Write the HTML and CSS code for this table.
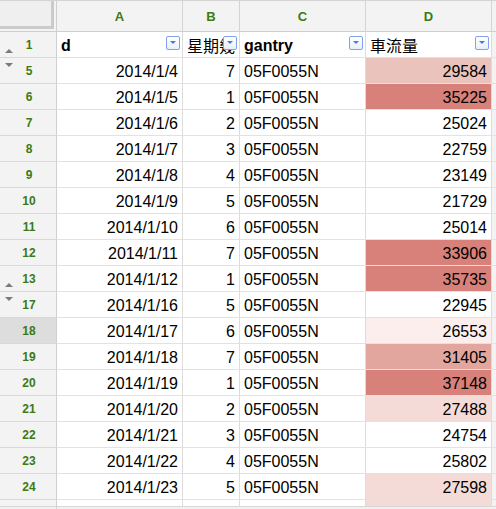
FILE: index.html
```html
<!DOCTYPE html>
<html>
<head>
<meta charset="utf-8">
<link rel="stylesheet" href="styles.css">
</head>
<body>
<div class="sheet">
  <div class="corner"><span class="corner-box"></span></div>
  <div class="colhead">A</div>
  <div class="colhead">B</div>
  <div class="colhead">C</div>
  <div class="colhead">D</div>
  <div class="gutter head-gutter"></div>

  <div class="rowhead"><span class="tri up"></span>1</div>
  <div class="cell hdr"><span class="hd-text">d</span><span class="filter"></span></div>
  <div class="cell hdr"><span class="hd-text cjk">星期幾</span><span class="filter"></span></div>
  <div class="cell hdr"><span class="hd-text">gantry</span><span class="filter"></span></div>
  <div class="cell hdr"><span class="hd-text cjk">車流量</span><span class="filter"></span></div>
  <div class="gutter"></div>

  <div class="rowhead"><span class="tri down"></span>5</div>
  <div class="cell num">2014/1/4</div><div class="cell num">7</div><div class="cell">05F0055N</div><div class="cell num h3">29584</div><div class="gutter"></div>

  <div class="rowhead">6</div>
  <div class="cell num">2014/1/5</div><div class="cell num">1</div><div class="cell">05F0055N</div><div class="cell num h6">35225</div><div class="gutter"></div>

  <div class="rowhead">7</div>
  <div class="cell num">2014/1/6</div><div class="cell num">2</div><div class="cell">05F0055N</div><div class="cell num">25024</div><div class="gutter"></div>

  <div class="rowhead">8</div>
  <div class="cell num">2014/1/7</div><div class="cell num">3</div><div class="cell">05F0055N</div><div class="cell num">22759</div><div class="gutter"></div>

  <div class="rowhead">9</div>
  <div class="cell num">2014/1/8</div><div class="cell num">4</div><div class="cell">05F0055N</div><div class="cell num">23149</div><div class="gutter"></div>

  <div class="rowhead">10</div>
  <div class="cell num">2014/1/9</div><div class="cell num">5</div><div class="cell">05F0055N</div><div class="cell num">21729</div><div class="gutter"></div>

  <div class="rowhead">11</div>
  <div class="cell num">2014/1/10</div><div class="cell num">6</div><div class="cell">05F0055N</div><div class="cell num">25014</div><div class="gutter"></div>

  <div class="rowhead">12</div>
  <div class="cell num">2014/1/11</div><div class="cell num">7</div><div class="cell">05F0055N</div><div class="cell num h6">33906</div><div class="gutter"></div>

  <div class="rowhead"><span class="tri up"></span>13</div>
  <div class="cell num">2014/1/12</div><div class="cell num">1</div><div class="cell">05F0055N</div><div class="cell num h6">35735</div><div class="gutter"></div>

  <div class="rowhead"><span class="tri down"></span>17</div>
  <div class="cell num">2014/1/16</div><div class="cell num">5</div><div class="cell">05F0055N</div><div class="cell num">22945</div><div class="gutter"></div>

  <div class="rowhead selected">18</div>
  <div class="cell num">2014/1/17</div><div class="cell num">6</div><div class="cell">05F0055N</div><div class="cell num h1">26553</div><div class="gutter"></div>

  <div class="rowhead">19</div>
  <div class="cell num">2014/1/18</div><div class="cell num">7</div><div class="cell">05F0055N</div><div class="cell num h4">31405</div><div class="gutter"></div>

  <div class="rowhead">20</div>
  <div class="cell num">2014/1/19</div><div class="cell num">1</div><div class="cell">05F0055N</div><div class="cell num h6">37148</div><div class="gutter"></div>

  <div class="rowhead">21</div>
  <div class="cell num">2014/1/20</div><div class="cell num">2</div><div class="cell">05F0055N</div><div class="cell num h2">27488</div><div class="gutter"></div>

  <div class="rowhead">22</div>
  <div class="cell num">2014/1/21</div><div class="cell num">3</div><div class="cell">05F0055N</div><div class="cell num">24754</div><div class="gutter"></div>

  <div class="rowhead">23</div>
  <div class="cell num">2014/1/22</div><div class="cell num">4</div><div class="cell">05F0055N</div><div class="cell num">25802</div><div class="gutter"></div>

  <div class="rowhead">24</div>
  <div class="cell num">2014/1/23</div><div class="cell num">5</div><div class="cell">05F0055N</div><div class="cell num h2">27598</div><div class="gutter"></div>

  <div class="rowhead partial"></div>
  <div class="cell partial"></div><div class="cell partial"></div><div class="cell partial"></div><div class="cell partial h2"></div><div class="gutter partial"></div>
</div>
<div class="scrollbar"><span class="sb-left"></span></div>
</body>
</html>
```

FILE: styles.css
```css
html, body {
  margin: 0;
  padding: 0;
  background: #ffffff;
  overflow: hidden;
}

body {
  width: 496px;
  height: 509px;
  font-family: "Liberation Sans", Arial, "Noto Sans CJK TC", sans-serif;
}

.sheet {
  display: grid;
  grid-template-columns: 57px 126px 57px 126px 126px 1fr;
  grid-template-rows: 31px repeat(18, 26px) 7px;
  border-top: 1px solid #d4d4d4;
}

.sheet > div {
  box-sizing: border-box;
}

.corner {
  background: #f3f3f3;
  border-right: 1px solid #cfcfcf;
  border-bottom: 1px solid #cfcfcf;
  position: relative;
}

.corner-box {
  display: block;
  width: 51px;
  height: 25px;
  background: #efefef;
  border-right: 3px solid #cbcbcb;
  border-bottom: 3px solid #cbcbcb;
}

.colhead {
  background: #f3f3f3;
  border-right: 1px solid #d4d4d4;
  border-bottom: 1px solid #cfcfcf;
  color: #3c7a14;
  font-weight: bold;
  font-size: 13px;
  display: flex;
  align-items: center;
  justify-content: center;
  padding-top: 1px;
}

.gutter {
  background: #f3f3f3;
  border-bottom: 1px solid #e2e2e2;
}

.head-gutter {
  border-bottom: 1px solid #cfcfcf;
}

.rowhead {
  background: #f3f3f3;
  border-right: 1px solid #cfcfcf;
  border-bottom: 1px solid #d8d8d8;
  color: #3c7a14;
  font-weight: bold;
  font-size: 12px;
  display: flex;
  align-items: center;
  justify-content: center;
  position: relative;
  padding-left: 2px;
}

.rowhead.selected {
  background: #dddddd;
}

.tri {
  position: absolute;
  left: 5px;
  width: 0;
  height: 0;
  border-left: 4px solid transparent;
  border-right: 4px solid transparent;
}

.tri.up {
  bottom: 4px;
  border-bottom: 4px solid #7a7a7a;
}

.tri.down {
  top: 5px;
  border-top: 4px solid #7a7a7a;
}

.cell {
  border-right: 1px solid #dcdcdc;
  border-bottom: 1px solid #e2e2e2;
  font-size: 16px;
  color: #000;
  padding: 0 4px 0 4px;
  display: flex;
  align-items: center;
  white-space: nowrap;
  overflow: hidden;
  padding-top: 2px;
}

.cell.num {
  justify-content: flex-end;
  padding-right: 4px;
}

.cell.hdr {
  position: relative;
  font-weight: bold;
}

.hd-text {
  display: block;
}

.hd-text.cjk {
  font-weight: normal;
  font-family: "Noto Sans CJK TC", "Noto Sans CJK SC", sans-serif;
  font-size: 16px;
  margin-top: -2px;
}

.filter {
  position: absolute;
  right: 2px;
  top: 4px;
  width: 14px;
  height: 14px;
  box-sizing: border-box;
  border: 1px solid #7ea3ec;
  border-radius: 2px;
  background: linear-gradient(#ffffff, #e9effb);
}

.filter::after {
  content: "";
  position: absolute;
  left: 3px;
  top: 4px;
  width: 0;
  height: 0;
  border-left: 3px solid transparent;
  border-right: 3px solid transparent;
  border-top: 3px solid #4b78d6;
}

.h1 { background: #fbeeec; }
.h2 { background: #f5dbd7; }
.h3 { background: #eac4bc; }
.h4 { background: #e2a69f; }
.h6 { background: #d7817a; }

.partial {
  border-bottom: 1px solid #d8d8d8;
}

.scrollbar {
  height: 4px;
  background: #f1f1f1;
  display: flex;
}

.sb-left {
  display: block;
  width: 57px;
  border-right: 1px solid #d4d4d4;
  box-sizing: border-box;
}
```
